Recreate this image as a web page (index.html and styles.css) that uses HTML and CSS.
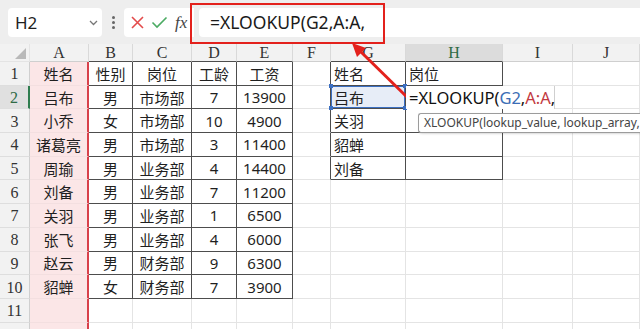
FILE: index.html
```html
<!DOCTYPE html>
<html lang="zh-CN">
<head>
  <meta charset="UTF-8" />
  <title>XLOOKUP</title>
  <link rel="stylesheet" href="styles.css">
</head>
<body>
<div class="app">
  <!-- barra formula -->
  <div class="fbar">
    <div class="namebox">
      <span>H2</span>
      <svg width="9" height="6" viewBox="0 0 9 6"><polyline points="1,1 4.5,4.5 8,1" fill="none" stroke="#777" stroke-width="1.3"/></svg>
    </div>
    <div class="dots"><i></i><i></i><i></i></div>
    <div class="tools">
      <svg width="15" height="15" viewBox="0 0 15 15"><path d="M2 2L13 13M13 2L2 13" stroke="#e34b4b" stroke-width="1.6" fill="none"/></svg>
      <svg width="17" height="15" viewBox="0 0 17 15"><polyline points="1.5,7.5 6,12 15.5,2.5" stroke="#4bab63" stroke-width="1.6" fill="none"/></svg>
      <span class="fx">fx</span>
    </div>
    <div class="finput">=XLOOKUP(G2,A:A,</div>
  </div>

  <!-- foglio -->
  <div class="sheet">
    <div class="corner"><b></b></div>
    <div class="ch">A</div><div class="ch db">B</div><div class="ch db">C</div><div class="ch db">D</div><div class="ch db">E</div>
    <div class="ch">F</div><div class="ch db">G</div><div class="ch db act">H</div><div class="ch">I</div><div class="ch">J</div>

    <div class="rh">1</div>
    <div class="c a">姓名</div><div class="c t">性别</div><div class="c t">岗位</div><div class="c t">工龄</div><div class="c t">工资</div>
    <div class="c dr"></div><div class="c t l">姓名</div><div class="c t l">岗位</div><div class="c"></div><div class="c"></div>

    <div class="rh act">2</div>
    <div class="c a">吕布</div><div class="c t">男</div><div class="c t">市场部</div><div class="c t">7</div><div class="c t">13900</div>
    <div class="c dr"></div>
    <div class="c t l sel">吕布<i class="h1"></i><i class="h2"></i><i class="h3"></i><i class="h4"></i></div>
    <div class="c t l edit">
      <span class="editor">=XLOOKUP(<span class="ref-b">G2</span>,<span class="ref-r">A:A</span>,</span>
      <span class="tip">XLOOKUP(lookup_value, lookup_array, r</span>
    </div>
    <div class="c"></div><div class="c"></div>

    <div class="rh">3</div>
    <div class="c a">小乔</div><div class="c t">女</div><div class="c t">市场部</div><div class="c t">10</div><div class="c t">4900</div>
    <div class="c dr"></div><div class="c t l">关羽</div><div class="c t l"></div><div class="c"></div><div class="c"></div>

    <div class="rh">4</div>
    <div class="c a">诸葛亮</div><div class="c t">男</div><div class="c t">市场部</div><div class="c t">3</div><div class="c t">11400</div>
    <div class="c dr"></div><div class="c t l">貂蝉</div><div class="c t l"></div><div class="c"></div><div class="c"></div>

    <div class="rh">5</div>
    <div class="c a">周瑜</div><div class="c t">男</div><div class="c t">业务部</div><div class="c t">4</div><div class="c t">14400</div>
    <div class="c dr"></div><div class="c t l">刘备</div><div class="c t l"></div><div class="c"></div><div class="c"></div>

    <div class="rh">6</div>
    <div class="c a">刘备</div><div class="c t">男</div><div class="c t">业务部</div><div class="c t">7</div><div class="c t">11200</div>
    <div class="c"></div><div class="c"></div><div class="c"></div><div class="c"></div><div class="c"></div>

    <div class="rh">7</div>
    <div class="c a">关羽</div><div class="c t">男</div><div class="c t">业务部</div><div class="c t">1</div><div class="c t">6500</div>
    <div class="c"></div><div class="c"></div><div class="c"></div><div class="c"></div><div class="c"></div>

    <div class="rh">8</div>
    <div class="c a">张飞</div><div class="c t">男</div><div class="c t">业务部</div><div class="c t">4</div><div class="c t">6000</div>
    <div class="c"></div><div class="c"></div><div class="c"></div><div class="c"></div><div class="c"></div>

    <div class="rh">9</div>
    <div class="c a">赵云</div><div class="c t">男</div><div class="c t">财务部</div><div class="c t">9</div><div class="c t">6300</div>
    <div class="c"></div><div class="c"></div><div class="c"></div><div class="c"></div><div class="c"></div>

    <div class="rh">10</div>
    <div class="c a">貂蝉</div><div class="c t">女</div><div class="c t">财务部</div><div class="c t">7</div><div class="c t">3900</div>
    <div class="c"></div><div class="c"></div><div class="c"></div><div class="c"></div><div class="c"></div>

    <div class="rh">11</div>
    <div class="c a"></div><div class="c"></div><div class="c"></div><div class="c"></div><div class="c"></div>
    <div class="c"></div><div class="c"></div><div class="c"></div><div class="c"></div><div class="c"></div>

    <div class="rh"></div>
    <div class="c a"></div><div class="c"></div><div class="c"></div><div class="c"></div><div class="c"></div>
    <div class="c"></div><div class="c"></div><div class="c"></div><div class="c"></div><div class="c"></div>
  </div>

  <!-- annotazioni -->
  <div class="mark"></div>
  <svg class="arrow" width="640" height="329" viewBox="0 0 640 329">
    <line x1="411" y1="101" x2="360" y2="51" stroke="#e3211c" stroke-width="3"/>
    <polygon points="352,43 366,48 357,57" fill="#e3211c"/>
  </svg>
</div>
</body>
</html>
```

FILE: styles.css
```css
html, body {
  margin: 0;
  overflow: hidden;
}

.app {
  position: relative;
  width: 640px;
  height: 329px;
  overflow: hidden;
  background: #fff;
  font-family: "Noto Sans", "Noto Sans CJK SC", sans-serif;
  color: #1f1f1f;
}

/* barra formula */
.fbar {
  height: 44px;
  box-sizing: border-box;
  padding: 8px 0 7px 8px;
  background: #eeeeee;
  display: flex;
  align-items: stretch;
}

.namebox {
  width: 94px;
  box-sizing: border-box;
  background: #fff;
  border-radius: 4px;
  padding: 0 4px 0 7px;
  display: flex;
  align-items: center;
  justify-content: space-between;
  font-size: 17px;
}

.dots {
  width: 22px;
  display: flex;
  flex-direction: column;
  align-items: center;
  justify-content: center;
  gap: 2px;
}

.dots i {
  width: 3px;
  height: 3px;
  border-radius: 50%;
  background: #666;
}

.tools {
  width: 70px;
  background: #fff;
  border-radius: 4px 0 0 4px;
  display: flex;
  align-items: center;
  gap: 6px;
  padding-left: 6px;
  box-sizing: border-box;
}

.fx {
  font-family: "Liberation Serif", serif;
  font-style: italic;
  font-size: 17px;
  color: #444;
  margin-left: 1px;
}

.finput {
  flex: 1;
  margin-left: 5px;
  background: #fff;
  border-radius: 4px 0 0 4px;
  padding-left: 11px;
  font-size: 17.5px;
  line-height: 29px;
  color: #1a1a1a;
}

/* foglio */
.sheet {
  display: grid;
  grid-template-columns: 30px 59px 44px 59px 45px 56px 38px 75px 97px 70px 1fr;
  grid-template-rows: 18px repeat(12, 23.7px);
  font-size: 15px;
}

.sheet > div {
  box-sizing: border-box;
  border-right: 1px solid #e4e4e4;
  border-bottom: 1px solid #e4e4e4;
  display: flex;
  align-items: center;
  justify-content: center;
  white-space: nowrap;
}

.corner {
  background: #f2f2f2;
  position: relative;
}

.corner b {
  position: absolute;
  left: 15px;
  top: 4px;
  width: 0;
  height: 0;
  border-left: 11px solid transparent;
  border-bottom: 11px solid #b9b9b9;
}

.ch, .rh {
  background: #f2f2f2;
  font-family: "Liberation Serif", serif;
  font-size: 16px;
  color: #333;
}

.sheet > .ch {
  border-right-color: #d9d9d9;
  border-bottom-color: #cfcfcf;
}

.sheet > .rh {
  border-right-color: #cfcfcf;
  border-bottom-color: #dedede;
  padding-top: 2px;
}

.sheet > .ch.act {
  background: #dcdcdc;
  color: #2e6b45;
}

.sheet > .rh.act {
  background: #e0e0e0;
  color: #2e6b45;
  border-right: 2px solid #2f7d4f;
}

.sheet > .db {
  border-bottom-color: #4d4d4d;
}

.sheet > .a {
  background: #fbe6e7;
  border-right: 2px solid #d8414b;
  border-bottom-color: #f3dfe0;
}

.sheet > .t {
  border-right-color: #4d4d4d;
  border-bottom-color: #4d4d4d;
}

.sheet > .dr {
  border-right-color: #4d4d4d;
}

.sheet > .l {
  justify-content: flex-start;
  padding-left: 3px;
}

/* cella selezionata */
.sheet > .sel {
  position: relative;
  background: #e7edf7;
  box-shadow: inset 0 0 0 1px #3b6fc2;
}

.sel i {
  position: absolute;
  width: 4px;
  height: 4px;
  background: #3b6fc2;
}

.sel .h1 { left: -2px; top: -2px; }
.sel .h2 { left: -2px; bottom: -2px; }
.sel .h3 { right: -2px; top: -2px; }
.sel .h4 { right: -2px; bottom: -2px; }

/* cella in modifica */
.sheet > .edit {
  position: relative;
  box-shadow: inset 0 1px 0 #2f7d4f;
}

.editor {
  position: absolute;
  left: 0;
  top: 0;
  width: 149px;
  height: 23px;
  box-sizing: border-box;
  padding-left: 3px;
  background: #fff;
  border-right: 1px solid #cfcfcf;
  font-size: 16.5px;
  line-height: 24px;
  color: #111;
  z-index: 2;
}

.ref-b { color: #3b6db5; }
.ref-r { color: #c23a3f; }

.tip {
  position: absolute;
  left: 12px;
  top: 27px;
  width: 240px;
  height: 20px;
  box-sizing: border-box;
  padding: 0 5px;
  background: #fff;
  border: 1px solid #9c9c9c;
  border-right: 0;
  border-radius: 3px 0 0 3px;
  box-shadow: 1px 1px 2px rgba(0, 0, 0, 0.15);
  font-size: 12px;
  line-height: 18px;
  color: #444;
  overflow: hidden;
  z-index: 3;
}

/* annotazioni */
.mark {
  position: absolute;
  left: 190px;
  top: 3px;
  width: 195px;
  height: 41px;
  box-sizing: border-box;
  border: 2px solid #e3211c;
}

.arrow {
  position: absolute;
  left: 0;
  top: 0;
  pointer-events: none;
}
```
